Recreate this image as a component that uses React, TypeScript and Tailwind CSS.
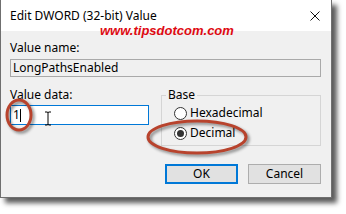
import React from 'react';

const ui = { fontFamily: '"Noto Sans", "Open Sans", sans-serif' };

function Radio({ checked, label }: { checked?: boolean; label: string }) {
  return (
    <div className="flex items-center h-[14px] pl-[12px] gap-[3px]">
      <span className="w-[13px] h-[13px] rounded-full border border-[#333333] bg-white flex items-center justify-center">
        {checked && <span className="w-[7px] h-[7px] rounded-full bg-[#333333]" />}
      </span>
      <span className="text-[12px] leading-[14px] text-black">{label}</span>
    </div>
  );
}

export default function App() {
  return (
    <div className="relative w-[346px] h-[214px] bg-white overflow-hidden" style={ui}>
      <div className="w-[332px] h-[198px] border border-t-0 border-[#6f6f6f] flex flex-col shadow-[5px_5px_5px_rgba(0,0,0,0.65)]">
        {/* Title bar */}
        <div className="h-[31px] bg-white flex items-center justify-between pl-[9px] pr-[11px]">
          <span className="text-[12px] leading-[14px] text-black">Edit DWORD (32-bit) Value</span>
          <svg width="10" height="10" viewBox="0 0 10 10">
            <path d="M0.5 0.5 L9.5 9.5 M9.5 0.5 L0.5 9.5" stroke="#111" strokeWidth="1" />
          </svg>
        </div>

        {/* Body */}
        <div className="flex-1 bg-[#f0f0f0] pl-[9px] pr-[10px] pt-[10px] flex flex-col">
          <div className="text-[12px] leading-[14px] text-black">Value name:</div>
          <div className="mt-[4px] h-[18px] border border-[#a9a9a9] bg-[#f0f0f0] pl-[2px] flex items-center text-[12px] text-black">
            LongPathsEnabled
          </div>

          <div className="flex items-start">
            <div className="w-[139px] flex flex-col">
              <div className="mt-[11px] text-[12px] leading-[14px] text-black">Value data:</div>
              <div className="relative mt-[3px] h-[20px] border border-[#0078d7] bg-white pl-[2px] flex items-center text-[12px] text-black">
                <span>1</span>
                <span className="w-px h-[13px] bg-black" />
                {/* I-beam cursor */}
                <svg className="absolute left-[33px] top-[5px]" width="8" height="15" viewBox="0 0 8 15">
                  <path d="M1 1 H3 M5 1 H7 M4 1.5 V13.5 M1 14 H3 M5 14 H7 M3 1 L4 1.5 L5 1 M3 14 L4 13.5 L5 14" stroke="#000" strokeWidth="1" fill="none" />
                </svg>
              </div>
            </div>

            <fieldset className="mt-[11px] ml-[12px] w-[160px] border border-[#d5d5d5] pb-[5px]">
              <legend className="ml-[4px] px-[2px] text-[12px] leading-[14px] text-black">Base</legend>
              <div className="mt-[4px] flex flex-col gap-[6px]">
                <Radio label="Hexadecimal" />
                <Radio checked label="Decimal" />
              </div>
            </fieldset>
          </div>

          <div className="mt-[18px] flex justify-end gap-[10px]">
            <button className="w-[73px] h-[20px] border-2 border-[#0078d7] bg-[#e1e1e1] text-[12px] text-black flex items-center justify-center">
              OK
            </button>
            <button className="w-[73px] h-[20px] border border-[#adadad] bg-[#e1e1e1] text-[12px] text-black flex items-center justify-center">
              Cancel
            </button>
          </div>
        </div>
      </div>

      {/* Watermark */}
      <span
        className="absolute left-[100px] top-[23px] text-[13px] leading-[16px] font-bold italic text-[#de0a12]"
        style={{ fontFamily: '"Liberation Sans", Arial, sans-serif' }}
      >
        www.tipsdotcom.com
      </span>

      {/* Red highlight ovals */}
      <svg
        className="absolute left-0 top-0 pointer-events-none"
        width="346"
        height="214"
        style={{ filter: 'drop-shadow(2px 2px 1.5px rgba(0,0,0,0.45))' }}
      >
        <ellipse cx="19" cy="115" rx="12" ry="15" fill="none" stroke="#b8432d" strokeWidth="3" />
        <ellipse cx="197" cy="137" rx="49" ry="16" fill="none" stroke="#b8432d" strokeWidth="3" />
      </svg>
    </div>
  );
}
